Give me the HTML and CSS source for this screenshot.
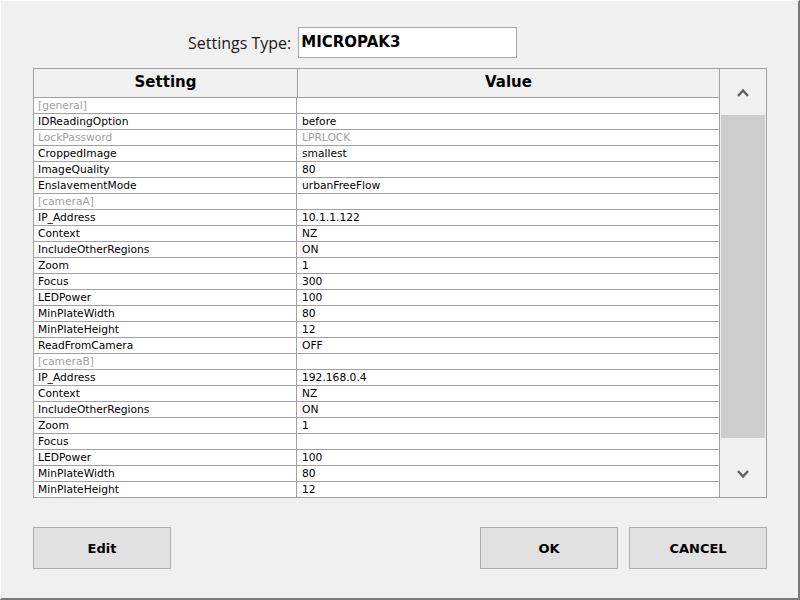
FILE: index.html
```html
<!DOCTYPE html>
<html>
<head>
<meta charset="utf-8">
<link rel="stylesheet" href="styles.css">
</head>
<body>
<div class="window">
  <div class="type-row">
    <span class="type-label">Settings Type:</span>
    <div class="type-input">MICROPAK3</div>
  </div>
  <div class="grid-box">
    <div class="table">
      <div class="head">
        <div class="hcell c1">Setting</div>
        <div class="hcell c2">Value</div>
      </div>
      <div class="row dim"><div class="cell c1">[general]</div><div class="cell c2"></div></div>
      <div class="row"><div class="cell c1">IDReadingOption</div><div class="cell c2">before</div></div>
      <div class="row dim"><div class="cell c1">LockPassword</div><div class="cell c2">LPRLOCK</div></div>
      <div class="row"><div class="cell c1">CroppedImage</div><div class="cell c2">smallest</div></div>
      <div class="row"><div class="cell c1">ImageQuality</div><div class="cell c2">80</div></div>
      <div class="row"><div class="cell c1">EnslavementMode</div><div class="cell c2">urbanFreeFlow</div></div>
      <div class="row dim"><div class="cell c1">[cameraA]</div><div class="cell c2"></div></div>
      <div class="row"><div class="cell c1">IP_Address</div><div class="cell c2">10.1.1.122</div></div>
      <div class="row"><div class="cell c1">Context</div><div class="cell c2">NZ</div></div>
      <div class="row"><div class="cell c1">IncludeOtherRegions</div><div class="cell c2">ON</div></div>
      <div class="row"><div class="cell c1">Zoom</div><div class="cell c2">1</div></div>
      <div class="row"><div class="cell c1">Focus</div><div class="cell c2">300</div></div>
      <div class="row"><div class="cell c1">LEDPower</div><div class="cell c2">100</div></div>
      <div class="row"><div class="cell c1">MinPlateWidth</div><div class="cell c2">80</div></div>
      <div class="row"><div class="cell c1">MinPlateHeight</div><div class="cell c2">12</div></div>
      <div class="row"><div class="cell c1">ReadFromCamera</div><div class="cell c2">OFF</div></div>
      <div class="row dim"><div class="cell c1">[cameraB]</div><div class="cell c2"></div></div>
      <div class="row"><div class="cell c1">IP_Address</div><div class="cell c2">192.168.0.4</div></div>
      <div class="row"><div class="cell c1">Context</div><div class="cell c2">NZ</div></div>
      <div class="row"><div class="cell c1">IncludeOtherRegions</div><div class="cell c2">ON</div></div>
      <div class="row"><div class="cell c1">Zoom</div><div class="cell c2">1</div></div>
      <div class="row"><div class="cell c1">Focus</div><div class="cell c2"></div></div>
      <div class="row"><div class="cell c1">LEDPower</div><div class="cell c2">100</div></div>
      <div class="row"><div class="cell c1">MinPlateWidth</div><div class="cell c2">80</div></div>
      <div class="row last"><div class="cell c1">MinPlateHeight</div><div class="cell c2">12</div></div>
    </div>
    <div class="scrollbar">
      <div class="sb-btn">
        <svg width="12" height="9" viewBox="0 0 12 9"><polyline points="1,8 6,2.5 11,8" fill="none" stroke="#606060" stroke-width="2.4"/></svg>
      </div>
      <div class="sb-thumb"></div>
      <div class="sb-track"></div>
      <div class="sb-btn">
        <svg width="12" height="9" viewBox="0 0 12 9"><polyline points="1,1 6,6.5 11,1" fill="none" stroke="#606060" stroke-width="2.4"/></svg>
      </div>
    </div>
  </div>
  <div class="buttons">
    <button class="btn">Edit</button>
    <div class="right-btns">
      <button class="btn">OK</button>
      <button class="btn">CANCEL</button>
    </div>
  </div>
</div>
</body>
</html>
```
FILE: styles.css
```css
html, body {
  margin: 0;
  padding: 0;
  background: #f0f0f0;
}
.window {
  width: 800px;
  height: 600px;
  box-sizing: border-box;
  background: #f0f0f0;
  border-top: 1px solid #ffffff;
  border-left: 1px solid #ffffff;
  border-right: 2px solid #7a7a7a;
  border-bottom: 2px solid #7a7a7a;
  padding: 26px 32px 0 32px;
  font-family: "Open Sans", "Noto Sans", sans-serif;
  color: #000;
}
.type-row {
  display: flex;
  align-items: center;
  margin-left: 155px;
  height: 31px;
}
.type-label {
  font-size: 16px;
  margin-right: 7px;
  color: #1a1a1a;
}
.type-input {
  width: 219px;
  height: 31px;
  box-sizing: border-box;
  border: 1px solid #a8a8a8;
  background: #fff;
  font-family: "DejaVu Sans", sans-serif;
  font-weight: bold;
  font-size: 15px;
  line-height: 29px;
  padding-left: 2px;
}
.grid-box {
  margin-top: 10px;
  width: 734px;
  height: 430px;
  box-sizing: border-box;
  border: 1px solid #a0a0a0;
  display: flex;
}
.table {
  width: 685px;
  border-right: 1px solid #a0a0a0;
  display: flex;
  flex-direction: column;
}
.head {
  display: flex;
  height: 28px;
  border-bottom: 1px solid #a0a0a0;
  background: #f0f0f0;
}
.hcell {
  font-family: "DejaVu Sans", sans-serif;
  font-weight: bold;
  font-size: 15px;
  line-height: 26px;
  text-align: center;
}
.c1 {
  width: 263px;
  border-right: 1px solid #a0a0a0;
  flex: none;
}
.c2 {
  width: 421px;
  flex: none;
}
.row {
  display: flex;
  height: 15px;
  border-bottom: 1px solid #a0a0a0;
  background: #fff;
}
.row.last {
  border-bottom: none;
}
.cell {
  font-family: "DejaVu Sans", sans-serif;
  font-size: 10.7px;
  line-height: 15px;
  padding-left: 4px;
  box-sizing: border-box;
  white-space: nowrap;
  overflow: hidden;
}
.cell.c2 {
  padding-left: 5px;
}
.row.dim .cell {
  color: #a0a0a0;
}
.scrollbar {
  width: 46px;
  display: flex;
  flex-direction: column;
  background: #f0f0f0;
}
.sb-btn {
  height: 46px;
  display: flex;
  align-items: center;
  justify-content: center;
}
.sb-thumb {
  height: 323px;
  margin: 0 1px;
  background: #cdcdcd;
}
.sb-track {
  flex: 1;
}
.buttons {
  display: flex;
  justify-content: space-between;
  margin-top: 29px;
  margin-right: -1px;
}
.right-btns {
  display: flex;
  gap: 11px;
}
.btn {
  width: 138px;
  height: 42px;
  box-sizing: border-box;
  border: 1px solid #adadad;
  background: #e1e1e1;
  font-family: "DejaVu Sans", sans-serif;
  font-weight: bold;
  font-size: 13px;
  color: #000;
  padding: 0;
}
```
